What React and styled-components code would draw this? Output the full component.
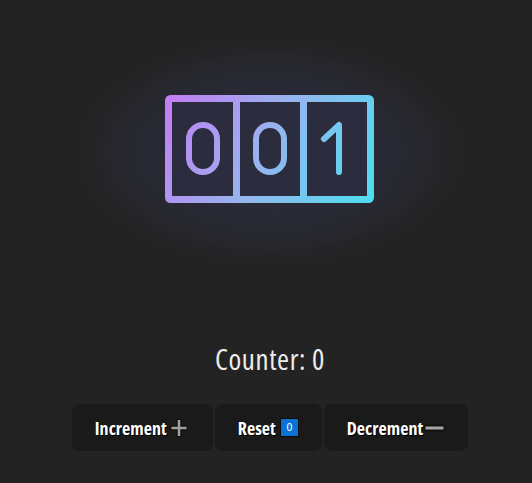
import React from 'react'
import styled, { createGlobalStyle } from 'styled-components';

const GlobalStyle = createGlobalStyle`
  html, body {
    margin: 0;
    padding: 0;
    background: #232323;
  }
  body {
    font-family: "Open Sans", "Roboto", sans-serif;
    font-stretch: 75%;
  }
`;

const Odometer = ({ value }) => {
    const digits = String(value).padStart(3, '0').split('');
    return (
        <svg width="210" height="108" viewBox="0 0 210 108">
            <defs>
                <linearGradient id="odo" x1="0" y1="0" x2="210" y2="108" gradientUnits="userSpaceOnUse">
                    <stop offset="0" stopColor="#c47cf3" />
                    <stop offset="0.5" stopColor="#95b6ee" />
                    <stop offset="1" stopColor="#4bdfee" />
                </linearGradient>
            </defs>
            <rect x="7" y="7" width="196" height="94" fill="#2b2c3e" />
            <g fill="none" stroke="url(#odo)" strokeWidth="7">
                <rect x="3.5" y="3.5" width="202" height="101" rx="2" />
                <line x1="71.5" y1="5" x2="71.5" y2="103" />
                <line x1="138.5" y1="5" x2="138.5" y2="103" />
            </g>
            <g fill="none" stroke="url(#odo)" strokeWidth="6" strokeLinecap="round" strokeLinejoin="round">
                {digits.map((d, i) => {
                    const cx = [38, 105, 172][i];
                    if (d === '1') {
                        return <path key={i} d={`M ${cx - 13} 44 L ${cx + 2} 30 L ${cx + 2} 77`} />;
                    }
                    return <rect key={i} x={cx - 14} y="30" width="28" height="47" rx="14" />;
                })}
            </g>
        </svg>
    );
};

const PlusIcon = () => (
    <svg width="22" height="22" viewBox="0 0 22 22">
        <path d="M11 2 V20 M2.5 11 H19.5" stroke="#111" strokeWidth="5" />
        <path d="M11 3 V19 M3.5 11 H18.5" stroke="#a0a0a0" strokeWidth="2.5" />
    </svg>
);

const MinusIcon = () => (
    <svg width="21" height="8" viewBox="0 0 21 8">
        <rect x="0.5" y="0.5" width="20" height="7" fill="#111" />
        <rect x="1.5" y="2.5" width="18" height="3" fill="#a6a6a6" />
    </svg>
);

const App = () => {
    const [count, setCount] = React.useState(0);

    return (
        <Wrapper>
            <GlobalStyle />
            <Hero>
                <Odometer value={1} />
            </Hero>
            <Title>Counter: {count}</Title>
            <ButtonRow>
                <Button onClick={() => setCount(count + 1)}>
                    Increment<PlusIcon />
                </Button>
                <Button onClick={() => setCount(0)}>
                    Reset<Keycap>0</Keycap>
                </Button>
                <Button onClick={() => setCount(count - 1)}>
                    Decrement<MinusIcon />
                </Button>
            </ButtonRow>
        </Wrapper>
    )
}

export default App;

const Wrapper = styled.div`
    min-height: 100vh;
    padding-left: 8px;
    display: flex;
    flex-direction: column;
    align-items: center;
    box-sizing: border-box;
`;

const Hero = styled.div`
    width: 100%;
    height: 298px;
    display: flex;
    justify-content: center;
    align-items: center;
    background: radial-gradient(ellipse 195px 115px at 50% 51%, #2c2d3d 0%, #2a2a39 45%, #27272e 78%, #232323 100%);
`;

const Title = styled.div`
    margin-top: 43px;
    font-size: 29px;
    letter-spacing: 0.6px;
    line-height: 35px;
    color: #ececec;
`;

const ButtonRow = styled.div`
    margin-top: 28px;
    display: flex;
    gap: 2px;
`;

const Button = styled.button`
    height: 47px;
    padding: 0 23px;
    display: flex;
    align-items: center;
    gap: 1px;
    border: none;
    border-radius: 8px;
    background: #1a1a1a;
    color: #ffffff;
    font-family: inherit;
    font-stretch: inherit;
    font-size: 18px;
    font-weight: bold;
    text-shadow: 1px 1px 0 #000;
    cursor: pointer;
`;

const Keycap = styled.span`
    width: 19px;
    height: 19px;
    margin-left: 3px;
    box-sizing: border-box;
    display: inline-flex;
    justify-content: center;
    align-items: center;
    background: #0a72d4;
    border: 1px solid #0b0b0b;
    font-family: "DejaVu Sans", sans-serif;
    font-size: 11px;
    font-weight: normal;
    text-shadow: none;
`;
